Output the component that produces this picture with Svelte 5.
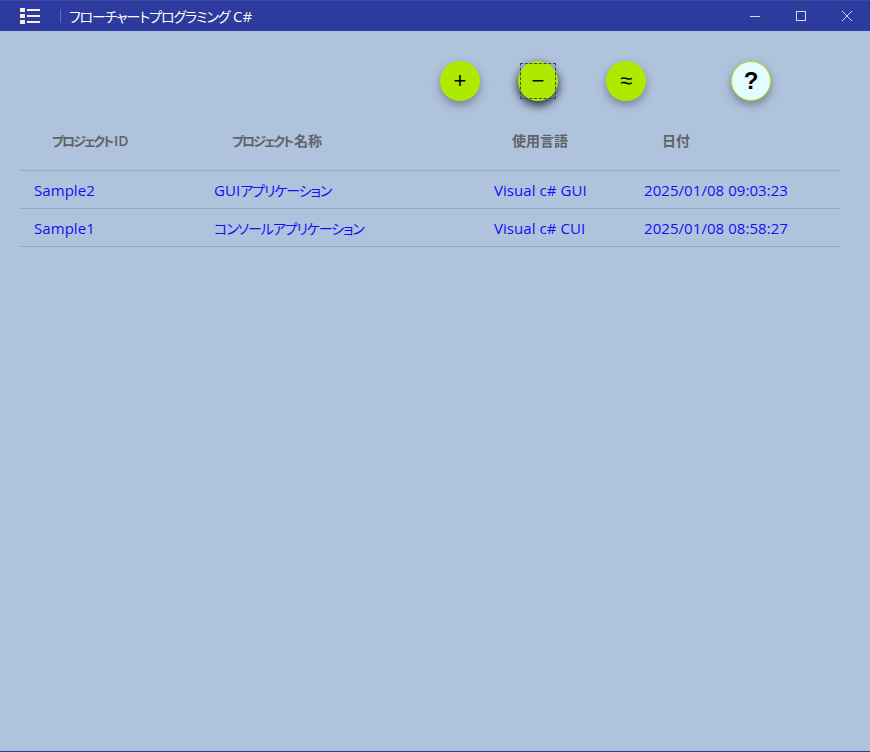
<script lang="ts">
  interface Project {
    id: string;
    name: string;
    lang: string;
    date: string;
  }

  const projects: Project[] = [
    { id: 'Sample2', name: 'GUIアプリケーション', lang: 'Visual c# GUI', date: '2025/01/08 09:03:23' },
    { id: 'Sample1', name: 'コンソールアプリケーション', lang: 'Visual c# CUI', date: '2025/01/08 08:58:27' }
  ];

  // katakana runs get tightened, the original UI font has narrow kana
  const parts = (s: string) => s.split(/([\u30a0-\u30ff]+)/).filter(Boolean);
  const isKana = (s: string) => /^[\u30a0-\u30ff]/.test(s);
</script>

{#snippet label(s: string)}
  {#each parts(s) as part, i (i)}<span class:kana={isKana(part)}>{part}</span>{/each}
{/snippet}

<div class="window">
  <header class="titlebar">
    <button class="menu" aria-label="menu">
      <svg width="20" height="16" viewBox="0 0 20 16">
        <path d="M0 0h5v4H0zM0 6h5v4H0zM0 12h5v4H0z" fill="#f4f1d8" />
        <path d="M7 1h13v2H7zM7 7h13v2H7zM7 13h13v2H7z" fill="#f4f1e4" />
      </svg>
    </button>
    <span class="sep"></span>
    <span class="title">{@render label('フローチャートプログラミング')} <b>C#</b></span>
    <div class="controls">
      <svg width="10" height="10" viewBox="0 0 10 10"><path d="M0 5.5h10" stroke="#d5d8ee" fill="none" /></svg>
      <svg width="10" height="10" viewBox="0 0 10 10"><rect x="0.5" y="0.5" width="9" height="9" stroke="#d5d8ee" fill="none" /></svg>
      <svg width="10" height="10" viewBox="0 0 10 10"><path d="M0 0l10 10M10 0L0 10" stroke="#d5d8ee" fill="none" /></svg>
    </div>
  </header>

  <div class="toolbar">
    <button class="fab add">+</button>
    <button class="fab remove focused">−</button>
    <button class="fab compare">≈</button>
    <button class="fab help">?</button>
  </div>

  <div class="list">
    <div class="row head">
      <span>{@render label('プロジェクトID')}</span>
      <span>{@render label('プロジェクト名称')}</span>
      <span>使用言語</span>
      <span>日付</span>
    </div>
    {#each projects as p (p.id)}
      <div class="row item">
        <span>{p.id}</span>
        <span>{@render label(p.name)}</span>
        <span>{p.lang}</span>
        <span>{p.date}</span>
      </div>
    {/each}
  </div>
</div>

<style>
  :global(body) {
    background: #afc3dc;
  }
  .window {
    height: 752px;
    box-sizing: border-box;
    background: #afc3dc;
    border-bottom: 1px solid #2e3b9e;
    font-family: "Open Sans", "Noto Sans CJK JP", sans-serif;
    font-feature-settings: "palt";
    display: flex;
    flex-direction: column;
  }
  .titlebar {
    height: 31px;
    flex: none;
    box-sizing: border-box;
    background: #2e3b9e;
    border-top: 1px solid #3a48a8;
    display: flex;
    align-items: center;
    color: #fff;
  }
  .menu {
    background: none;
    border: none;
    padding: 0;
    margin-left: 20px;
    display: flex;
  }
  .sep {
    width: 1px;
    height: 14px;
    background: #6570b8;
    margin-left: 20px;
  }
  .title {
    margin-left: 8px;
    font-size: 14px;
    white-space: nowrap;
  }
  .title .kana {
    letter-spacing: -1.1px;
  }
  .title b {
    font-size: 15px;
    font-weight: 500;
  }
  .controls {
    margin-left: auto;
    margin-right: 18px;
    display: flex;
    gap: 36px;
  }
  .controls svg {
    display: block;
  }
  .toolbar {
    display: flex;
    padding: 30px 0 0 440px;
  }
  .fab {
    width: 40px;
    height: 40px;
    border-radius: 50%;
    border: none;
    padding: 0;
    background: #aeea00;
    color: #000;
    font-family: "Liberation Sans", sans-serif;
    font-size: 22px;
    line-height: 38px;
    text-align: center;
    box-shadow: 0 4px 8px rgba(60, 70, 90, 0.5);
    position: relative;
  }
  .remove {
    margin-left: 38px;
    box-shadow: 0 4px 9px 1px rgba(30, 35, 50, 0.85);
  }
  .focused::after {
    content: '';
    position: absolute;
    left: 2px;
    top: 2px;
    width: 34px;
    height: 34px;
    border: 1px dashed #3c445c;
  }
  .compare {
    margin-left: 48px;
  }
  .help {
    margin-left: 85px;
    box-sizing: border-box;
    background: #e4fbff;
    border: 1px solid #aeea00;
    font-weight: 700;
    font-size: 24px;
  }
  .list {
    margin: 0 30px 0 20px;
    padding-top: 20px;
  }
  .row {
    display: grid;
    grid-template-columns: 180px 280px 150px 1fr;
    white-space: nowrap;
  }
  .head {
    height: 50px;
    box-sizing: border-box;
    padding: 10px 0 0 32px;
    font-size: 14px;
    font-weight: 600;
    line-height: 20px;
    color: #5f6368;
    border-bottom: 1px solid #98acc8;
  }
  .head .kana {
    font-size: 13px;
    letter-spacing: -2px;
    padding-right: 2px;
  }
  .item {
    height: 38px;
    box-sizing: border-box;
    padding-left: 14px;
    align-items: center;
    font-size: 15px;
    letter-spacing: 0.06px;
    color: #1010f8;
    border-bottom: 1px solid #98a8c4;
  }
  .item .kana {
    font-size: 14px;
    letter-spacing: -1.1px;
  }
</style>
